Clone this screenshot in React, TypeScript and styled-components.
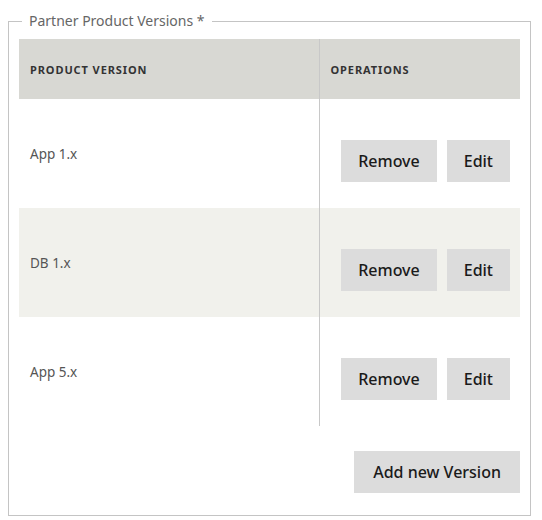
import React from 'react';
import styled, { createGlobalStyle } from 'styled-components';

const GlobalStyle = createGlobalStyle`
    body {
        margin: 8px;
        background: #fff;
        font-family: "Noto Sans", "Liberation Sans", sans-serif;
    }
`

const Fieldset = styled.fieldset`
    margin: 0;
    width: 523px;
    box-sizing: border-box;
    border: 1px solid #c4c4c4;
    padding: 5px 10px 22px 10px;
`

const Legend = styled.legend`
    margin-left: 3px;
    padding: 0 7px;
    font-size: 14px;
    color: #666;
    line-height: 26px;
`

const Table = styled.table`
    width: 501px;
    border-collapse: collapse;
    table-layout: fixed;
`

const HeadCell = styled.th<{ $divider?: boolean }>`
    height: 60px;
    padding: 0 0 0 11px;
    background: #d8d8d3;
    text-align: left;
    font-size: 11px;
    font-weight: 700;
    letter-spacing: 0.9px;
    color: #333;
    border-left: ${p => p.$divider ? '1px solid #c8c8c8' : 'none'};
`

const Row = styled.tr<{ $shaded?: boolean }>`
    background: ${p => p.$shaded ? '#f1f1ec' : 'transparent'};
`

const NameCell = styled.td`
    height: 109px;
    padding: 0 0 0 11px;
    font-size: 13.5px;
    color: #555;
    vertical-align: middle;
`

const OpsCell = styled.td`
    padding: 15px 10px 0 0;
    border-left: 1px solid #c8c8c8;
`

const Ops = styled.div`
    display: flex;
    justify-content: flex-end;
    gap: 10px;
`

const Button = styled.button<{ $pad?: number }>`
    height: 42px;
    padding: 0 ${p => p.$pad ?? 17}px;
    border: none;
    background: #dcdcdc;
    font-family: inherit;
    font-size: 16px;
    font-weight: 500;
    color: #1a1a1a;
    cursor: pointer;
`

const Footer = styled.div`
    display: flex;
    justify-content: flex-end;
    margin-top: 25px;
`

const versions = ['App 1.x', 'DB 1.x', 'App 5.x']

const App = () => {
    return (
        <>
            <GlobalStyle />
            <Fieldset>
                <Legend>Partner Product Versions *</Legend>
                <Table>
                    <colgroup>
                        <col style={{ width: 300 }} />
                        <col style={{ width: 201 }} />
                    </colgroup>
                    <thead>
                        <tr>
                            <HeadCell>PRODUCT VERSION</HeadCell>
                            <HeadCell $divider>OPERATIONS</HeadCell>
                        </tr>
                    </thead>
                    <tbody>
                        {versions.map((v, i) => (
                            <Row key={v} $shaded={i % 2 === 1}>
                                <NameCell>{v}</NameCell>
                                <OpsCell>
                                    <Ops>
                                        <Button>Remove</Button>
                                        <Button>Edit</Button>
                                    </Ops>
                                </OpsCell>
                            </Row>
                        ))}
                    </tbody>
                </Table>
                <Footer>
                    <Button $pad={19}>Add new Version</Button>
                </Footer>
            </Fieldset>
        </>
    )
}

export default App
